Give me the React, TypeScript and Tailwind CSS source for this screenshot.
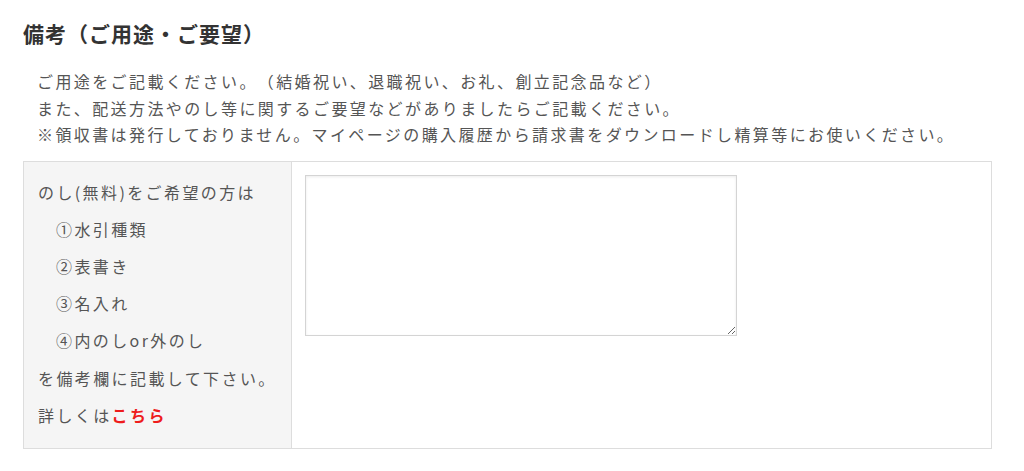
import React from "react";

export default function App() {
  const font = { fontFamily: '"Noto Sans CJK JP", "Noto Sans", sans-serif' };
  return (
    <div
      className="w-[1024px] h-[471px] bg-white pl-[23px] pt-[18px] text-[#555] [text-spacing-trim:space-all]"
      style={font}
    >
      <h2 className="text-[21px] font-bold leading-[30px] tracking-[1px] text-[#333]">
        備考（ご用途・ご要望）
      </h2>
      <div className="mt-[20px] ml-[14px] text-[16px] leading-[26.5px] tracking-[0.15em] text-[#555]">
        <p>ご用途をご記載ください。（結婚祝い、退職祝い、お礼、創立記念品など）</p>
        <p>また、配送方法やのし等に関するご要望などがありましたらご記載ください。</p>
        <p>※領収書は発行しておりません。マイページの購入履歴から請求書をダウンロードし精算等にお使いください。</p>
      </div>
      <div className="mt-[13px] flex w-[969px] h-[288px] border border-[#ddd]">
        <div className="w-[268px] shrink-0 bg-[#f5f5f5] border-r border-[#ddd] pl-[14px] pt-[12px] text-[16px] leading-[37.2px] tracking-[0.15em] text-[#555]">
          <p>のし(無料)をご希望の方は</p>
          <p className="pl-[18px]">①水引種類</p>
          <p className="pl-[18px]">②表書き</p>
          <p className="pl-[18px]">③名入れ</p>
          <p className="pl-[18px]">④内のしor外のし</p>
          <p>を備考欄に記載して下さい。</p>
          <p>
            詳しくは<a className="font-bold text-[#ee1c1c]">こちら</a>
          </p>
        </div>
        <div className="flex-1 pl-[13px] pt-[13px]">
          <textarea className="block w-[432px] h-[161px] border border-[#d4d4d4] bg-white shadow-[inset_0_1px_3px_rgba(0,0,0,0.08)] outline-none" />
        </div>
      </div>
    </div>
  );
}
